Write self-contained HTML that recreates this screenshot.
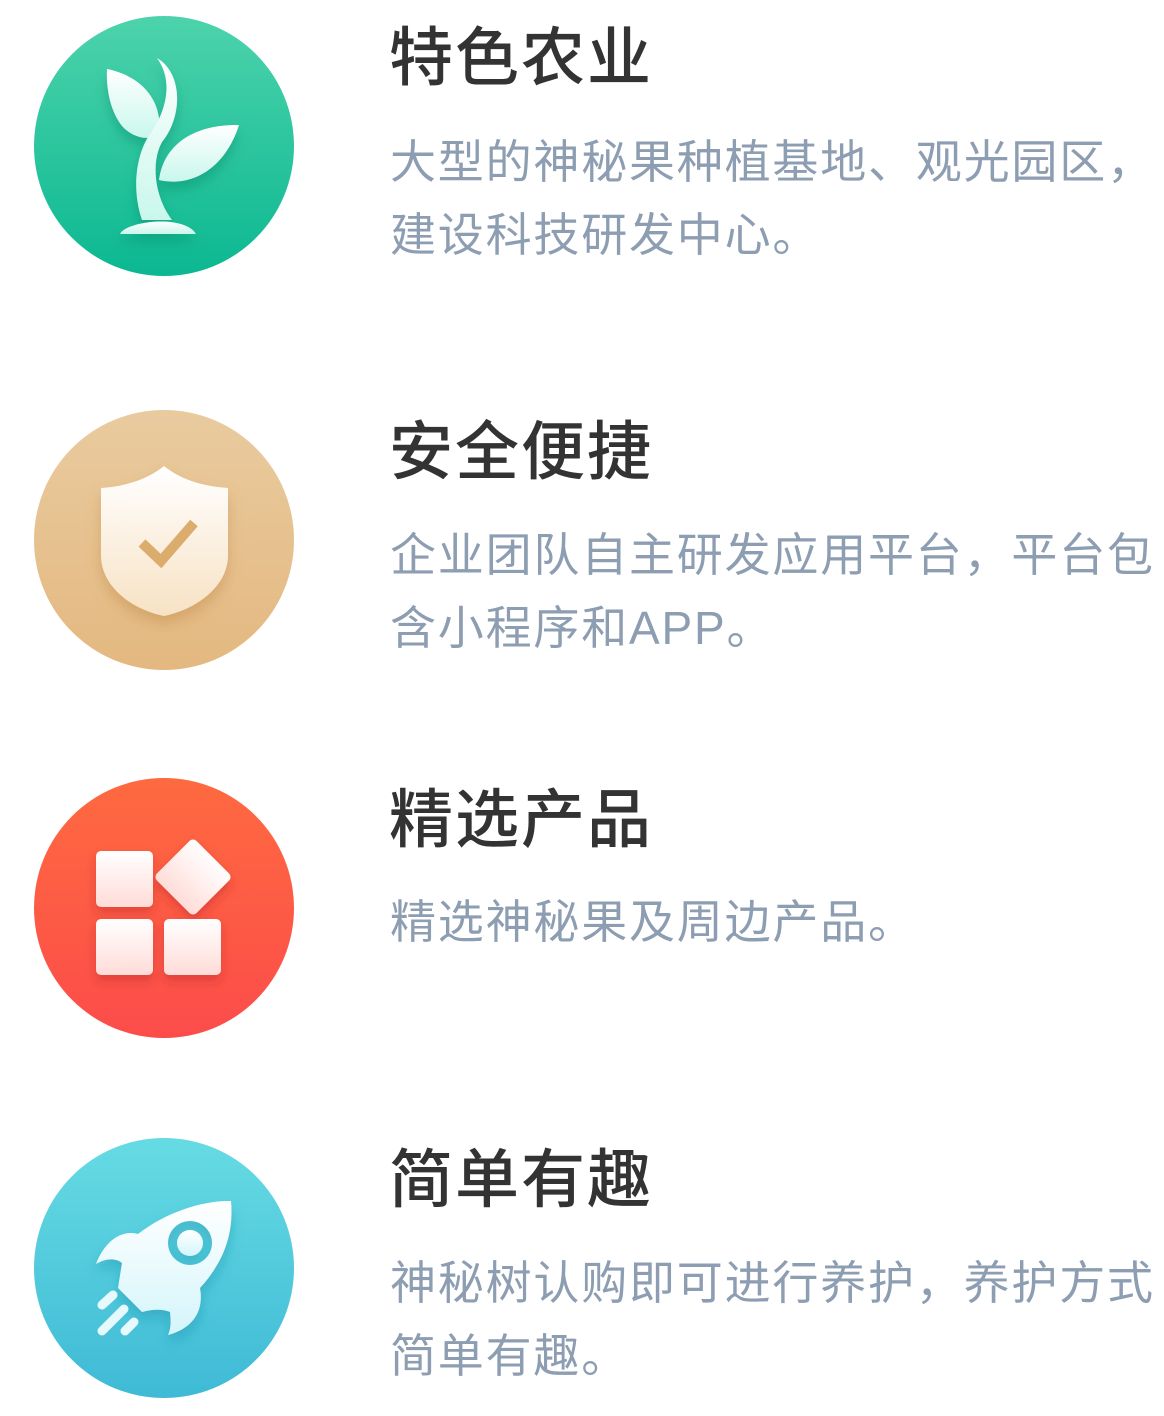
<!DOCTYPE html>
<html><head><meta charset="utf-8"><style>
html,body{margin:0;padding:0;background:#fff;width:1164px;height:1416px;overflow:hidden;position:relative}
svg{position:absolute;left:34px;width:260px;height:260px}
.t{position:absolute;left:389px;font-family:"Liberation Sans","Noto Sans CJK SC",sans-serif;font-size:64px;font-weight:500;color:#333;line-height:64px;white-space:nowrap;letter-spacing:2px}
.d{position:absolute;left:390px;font-family:"Liberation Sans","Noto Sans CJK SC",sans-serif;font-size:46px;color:#8d9db2;line-height:73px;white-space:nowrap;letter-spacing:1.8px}
</style></head><body>

<svg style="top:16px" viewBox="0 0 260 260">
<defs>
<linearGradient id="g1" x1="0" y1="0" x2="0" y2="1"><stop offset="0" stop-color="#4dd3ac"/><stop offset="1" stop-color="#0bb891"/></linearGradient>
<linearGradient id="w1" x1="0" y1="0" x2="0" y2="1"><stop offset="0" stop-color="#fff"/><stop offset="1" stop-color="#c9f7ec"/></linearGradient>
<filter id="s1" x="-30%" y="-30%" width="160%" height="160%"><feDropShadow dx="0" dy="8" stdDeviation="6" flood-color="#067a5e" flood-opacity="0.35"/></filter>
</defs>
<circle cx="130" cy="130" r="130" fill="url(#g1)"/>
<g fill="url(#w1)" filter="url(#s1)">
<path d="M73,53 C108,60 128,85 125,114 C122,126 100,124 88,110 C76,95 72,72 73,53Z"/>
<path d="M205,109 C165,108 130,125 125,164 C160,172 192,150 205,109Z"/>
<path d="M123,42 C150,58 148,102 128,126 C117,146 120,180 138,204 L108,204 C98,175 101,140 116,118 C132,96 140,65 123,42Z"/>
<path d="M86,218 C92,205 150,198 162,218Z"/>
</g>
</svg>
<div class="t" style="top:26px">特色农业</div>
<div class="d" style="top:126px">大型的神秘果种植基地、观光园区，<br>建设科技研发中心。</div>

<svg style="top:410px" viewBox="0 0 260 260">
<defs>
<linearGradient id="g2" x1="0" y1="0" x2="0" y2="1"><stop offset="0" stop-color="#e9cb9f"/><stop offset="1" stop-color="#e4b880"/></linearGradient>
<linearGradient id="w2" x1="0" y1="0" x2="0" y2="1"><stop offset="0" stop-color="#fff"/><stop offset="1" stop-color="#f7e2c4"/></linearGradient>
<filter id="s2" x="-30%" y="-30%" width="160%" height="160%"><feDropShadow dx="0" dy="8" stdDeviation="7" flood-color="#b57a35" flood-opacity="0.35"/></filter>
</defs>
<circle cx="130" cy="130" r="130" fill="url(#g2)"/>
<path filter="url(#s2)" fill="url(#w2)" d="M67,78 C95,76 115,68 130,56 C145,68 165,76 194,78 L194,145 C194,178 160,200 130,206 C100,200 67,178 67,145Z"/>
<path d="M108,133 L127,151 L160,113" fill="none" stroke="#dcac6d" stroke-width="10"/>
</svg>
<div class="t" style="top:420px">安全便捷</div>
<div class="d" style="top:519px">企业团队自主研发应用平台，平台包<br>含小程序和APP。</div>

<svg style="top:778px" viewBox="0 0 260 260">
<defs>
<linearGradient id="g3" x1="0" y1="0" x2="0" y2="1"><stop offset="0" stop-color="#fe6a40"/><stop offset="1" stop-color="#fc4c4a"/></linearGradient>
<linearGradient id="w3" x1="0" y1="0" x2="0" y2="1"><stop offset="0" stop-color="#fff"/><stop offset="1" stop-color="#ffdcd8"/></linearGradient>
<filter id="s3" x="-30%" y="-30%" width="160%" height="160%"><feDropShadow dx="0" dy="6" stdDeviation="5" flood-color="#b8242a" flood-opacity="0.4"/></filter>
</defs>
<circle cx="130" cy="130" r="130" fill="url(#g3)"/>
<g fill="url(#w3)" filter="url(#s3)">
<rect x="62" y="73" width="57" height="56" rx="5"/>
<rect x="62" y="141" width="57" height="56" rx="5"/>
<rect x="130" y="141" width="57" height="56" rx="5"/>
<rect x="131" y="71" width="56" height="56" rx="5" transform="rotate(45 159 99)"/>
</g>
</svg>
<div class="t" style="top:788px">精选产品</div>
<div class="d" style="top:886px">精选神秘果及周边产品。</div>

<svg style="top:1138px" viewBox="0 0 260 260">
<defs>
<linearGradient id="g4" x1="0" y1="0" x2="0" y2="1"><stop offset="0" stop-color="#66dbe3"/><stop offset="1" stop-color="#3fbad6"/></linearGradient>
<linearGradient id="w4" x1="0" y1="0" x2="0" y2="1"><stop offset="0" stop-color="#fff"/><stop offset="1" stop-color="#d4f5fb"/></linearGradient>
<filter id="s4" x="-30%" y="-30%" width="160%" height="160%"><feDropShadow dx="0" dy="8" stdDeviation="6" flood-color="#1b8ea8" flood-opacity="0.4"/></filter>
</defs>
<circle cx="130" cy="130" r="130" fill="url(#g4)"/>
<g filter="url(#s4)">
<path fill="url(#w4)" fill-rule="evenodd" d="M197,63 C170,62 132,74 104,96 C90,92 72,100 62,126 C72,120 82,120 88,125 L84,150 L108,174 C122,170 132,172 136,174 C137,184 137,190 134,197 C160,190 170,172 166,150 C190,124 200,95 197,63Z M156,83 A22,22 0 1 0 156.01,83Z"/>
<circle cx="156" cy="105" r="13" fill="url(#w4)"/>
</g>
<g stroke="#e6fafd" stroke-width="9" stroke-linecap="round">
<line x1="68" y1="167" x2="79" y2="157"/>
<line x1="68" y1="193" x2="90" y2="171"/>
<line x1="91" y1="193" x2="100" y2="184"/>
</g>
</svg>
<div class="t" style="top:1148px">简单有趣</div>
<div class="d" style="top:1247px">神秘树认购即可进行养护，养护方式<br>简单有趣。</div>

</body></html>
